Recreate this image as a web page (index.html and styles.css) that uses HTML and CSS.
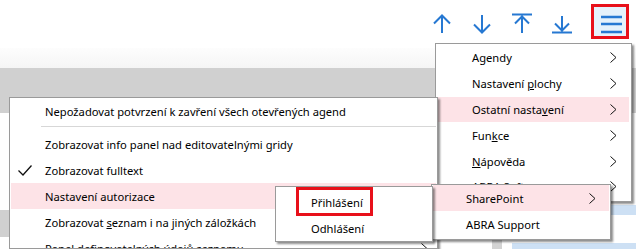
FILE: index.html
```html
<!DOCTYPE html>
<html lang="cs">
<head>
    <meta charset="UTF-8">
    <meta name="viewport" content="width=device-width, initial-scale=1.0">
    <title>Menu</title>
    <link rel="stylesheet" href="styles.css">
</head>
<body>
    <div class="app">
        <header class="toolbar">
            <button class="tool" title="Nahoru">
                <svg viewBox="0 0 24 24" width="24" height="24"><path d="M12 3.5V21M4 11.5L12 3.5L20 11.5"/></svg>
            </button>
            <button class="tool" title="Dolů">
                <svg viewBox="0 0 24 24" width="24" height="24"><path d="M12 3V20.5M4 12.5L12 20.5L20 12.5"/></svg>
            </button>
            <button class="tool" title="Na začátek">
                <svg viewBox="0 0 24 24" width="24" height="24"><path d="M2 2.5H22M12 4.5V21M5 11.5L12 4.5L19 11.5"/></svg>
            </button>
            <button class="tool" title="Na konec">
                <svg viewBox="0 0 24 24" width="24" height="24"><path d="M12 4V18.5M5 11.5L12 18.5L19 11.5M2 20.5H22"/></svg>
            </button>
            <button class="tool menu-btn" title="Menu">
                <svg viewBox="0 0 32 29" width="32" height="29"><path d="M7 10H28M7 17H28M7 25H28"/></svg>
            </button>
        </header>
        <div class="shade"></div>
        <div class="band"></div>
        <div class="workspace">
            <div class="pane-left"><div class="pane-row"></div></div>
            <div class="splitter"></div>
            <div class="pane-right">
                <div class="blue-row"></div>
                <div class="blue-row last"></div>
            </div>
        </div>
    </div>

    <!-- hlavni menu -->
    <div class="menu main-menu">
        <div class="item"><span class="label">Agendy</span><svg class="chev" viewBox="0 0 7 11" width="7" height="11"><path d="M0.5 0.5L6 5.5L0.5 10.5"/></svg></div>
        <div class="item"><span class="label">Nastavení <u>p</u>lochy</span><svg class="chev" viewBox="0 0 7 11" width="7" height="11"><path d="M0.5 0.5L6 5.5L0.5 10.5"/></svg></div>
        <div class="item active"><span class="label">Ostatní nasta<u>v</u>ení</span><svg class="chev" viewBox="0 0 7 11" width="7" height="11"><path d="M0.5 0.5L6 5.5L0.5 10.5"/></svg></div>
        <div class="item"><span class="label">Fun<u>k</u>ce</span><svg class="chev" viewBox="0 0 7 11" width="7" height="11"><path d="M0.5 0.5L6 5.5L0.5 10.5"/></svg></div>
        <div class="item"><span class="label"><u>N</u>ápověda</span><svg class="chev" viewBox="0 0 7 11" width="7" height="11"><path d="M0.5 0.5L6 5.5L0.5 10.5"/></svg></div>
        <div class="item"><span class="label">ABRA Software</span><svg class="chev" viewBox="0 0 7 11" width="7" height="11"><path d="M0.5 0.5L6 5.5L0.5 10.5"/></svg></div>
    </div>

    <!-- ostatni nastaveni -->
    <div class="menu sub-menu">
        <div class="item"><span class="gutter"></span><span class="label">Nepožadovat potvrzení k zavření všech otevřených agend</span></div>
        <div class="sep"></div>
        <div class="item"><span class="gutter"></span><span class="label">Zobrazovat info panel nad editovatelnými gridy</span></div>
        <div class="item"><span class="gutter"><svg class="tick" viewBox="0 0 14 11" width="14" height="11"><path d="M0.5 5.5L5 10L13.5 0.5"/></svg></span><span class="label">Zobrazovat fulltext</span></div>
        <div class="item active"><span class="gutter"></span><span class="label">Nastavení autorizace</span></div>
        <div class="item"><span class="gutter"></span><span class="label">Zobrazovat <u>s</u>eznam i na jiných záložkách</span></div>
        <div class="item"><span class="gutter"></span><span class="label">Panel definovatelných údajů seznamu</span><svg class="chev" viewBox="0 0 7 11" width="7" height="11"><path d="M0.5 0.5L6 5.5L0.5 10.5"/></svg></div>
    </div>

    <!-- napoveda -->
    <div class="menu help-menu">
        <div class="item active"><span class="gutter"></span><span class="label">SharePoint</span><svg class="chev" viewBox="0 0 7 11" width="7" height="11"><path d="M0.5 0.5L6 5.5L0.5 10.5"/></svg></div>
        <div class="item"><span class="gutter"></span><span class="label">ABRA Support</span></div>
    </div>

    <!-- autorizace -->
    <div class="menu auth-menu">
        <div class="item"><span class="gutter"></span><span class="label">Přihlášení</span><span class="highlight-box"></span></div>
        <div class="item"><span class="gutter"></span><span class="label">Odhlášení</span></div>
    </div>
</body>
</html>
```

FILE: styles.css
```css
body {
    margin: 0;
    width: 636px;
    height: 249px;
    overflow: hidden;
    background: #fff;
    font-family: "Noto Sans", "Open Sans", sans-serif;
    position: relative;
}
.app {
    display: flex;
    flex-direction: column;
    height: 249px;
}

/* toolbar */
.toolbar {
    height: 48px;
    display: flex;
    justify-content: flex-end;
    align-items: flex-start;
    padding-right: 7px;
}
.tool {
    width: 40px;
    height: 36px;
    margin-top: 6px;
    padding: 0;
    border: none;
    background: none;
    display: flex;
    align-items: center;
    justify-content: center;
}
.tool svg path {
    fill: none;
    stroke: #2678d2;
    stroke-width: 2;
}
.menu-btn {
    width: 38px;
    height: 35px;
    margin-top: 4px;
    margin-left: 9px;
    border: 3px solid #e8101a;
    background: #e5f1fb;
}
.menu-btn svg path { stroke-width: 2.6; }

.shade {
    height: 20px;
    background: linear-gradient(#fdfdfd, #f5f5f5);
}
.band {
    height: 45px;
    background: #d0d0d0;
}
.workspace {
    flex: 1;
    display: grid;
    grid-template-columns: 492px 10px 1fr;
}
.pane-row {
    margin-top: 97px;
    height: 27px;
    background: #d0d0d0;
}
.splitter { background: #d3d3d3; }
.pane-right { padding-left: 10px; }
.blue-row {
    margin-top: 92px;
    height: 10px;
    background: #cde0f4;
}
.blue-row.last {
    margin-top: 28px;
    height: 6px;
}

/* menus */
.menu {
    position: absolute;
    box-sizing: border-box;
    background: #fff;
    border: 1px solid #9a9a9a;
    box-shadow: 2px 2px 2px rgba(0, 0, 0, 0.45);
    font-size: 11.2px;
    color: #000;
}
.item {
    display: flex;
    align-items: center;
    height: 26px;
    white-space: nowrap;
}
.item.active { background: #fde3e7; }
.gutter {
    flex: none;
    width: 34px;
    display: flex;
    align-items: center;
}
.label { flex: 1; }
.chev {
    flex: none;
    fill: none;
    stroke: #111;
    stroke-width: 1;
}
.tick {
    margin-left: 7px;
    fill: none;
    stroke: #111;
    stroke-width: 1.3;
}

.main-menu {
    left: 435px;
    top: 43px;
    width: 197px;
    height: 159px;
    padding: 1px 2px;
    z-index: 1;
}
.main-menu .item {
    height: 25.8px;
    padding-left: 34px;
    padding-right: 12px;
}

.sub-menu {
    left: 9px;
    top: 97px;
    width: 429px;
    height: 152px;
    padding: 0 1px;
    overflow: hidden;
    z-index: 2;
}
.sub-menu .chev { margin-right: 8px; }
.sep {
    height: 7px;
    margin-left: 30px;
    background: linear-gradient(transparent 2px, #d7d7d7 2px, #d7d7d7 3px, transparent 3px);
}

.help-menu {
    left: 431px;
    top: 184px;
    width: 180px;
    padding: 0 1px 2px;
    z-index: 3;
}
.help-menu .gutter { width: 33px; }
.help-menu .chev { margin-right: 13px; }

.auth-menu {
    left: 275px;
    top: 186px;
    width: 158px;
    padding: 2px 1px 0;
    z-index: 4;
}
.auth-menu .item { position: relative; }
.highlight-box {
    position: absolute;
    left: 19px;
    top: -2px;
    width: 77px;
    height: 29px;
    box-sizing: border-box;
    border: 3px solid #e8101a;
}
```
